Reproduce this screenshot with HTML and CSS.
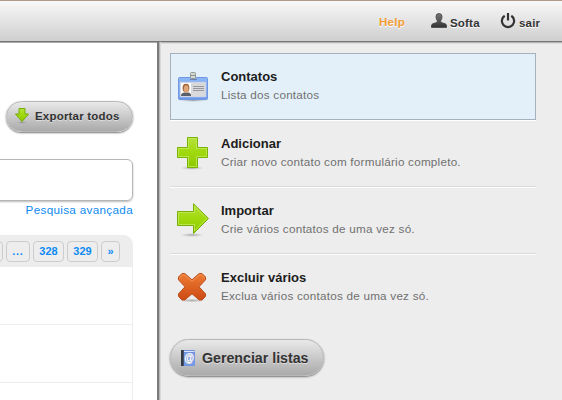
FILE: index.html
```html
<!DOCTYPE html>
<html lang="pt">
<head>
<meta charset="utf-8">
<title>Contatos</title>
<link rel="stylesheet" href="styles.css">
</head>
<body>
<svg width="0" height="0" class="defs" aria-hidden="true">
  <defs>
    <linearGradient id="green" x1="0" y1="0" x2="0" y2="1"><stop offset="0" stop-color="#b4e23c"/><stop offset=".5" stop-color="#a0d90c"/><stop offset="1" stop-color="#8cc800"/></linearGradient>
    <linearGradient id="orange" x1="0" y1="0" x2="0" y2="1"><stop offset="0" stop-color="#ee7c34"/><stop offset="1" stop-color="#cc4a14"/></linearGradient>
    <linearGradient id="dark" x1="0" y1="0" x2="0" y2="1"><stop offset="0" stop-color="#777"/><stop offset="1" stop-color="#333"/></linearGradient>
    <linearGradient id="blue" x1="0" y1="0" x2="0" y2="1"><stop offset="0" stop-color="#8db8f5"/><stop offset="1" stop-color="#6d94e6"/></linearGradient>
    <radialGradient id="shade"><stop offset="0" stop-color="#777" stop-opacity=".6"/><stop offset="1" stop-color="#999" stop-opacity="0"/></radialGradient>
  </defs>
</svg>
<header class="topbar">
  <a class="help">Help</a>
  <a class="user"><svg width="16" height="16" viewBox="0 0 16 16"><path d="M5 3.5Q5 .5 8 .5T11 3.5Q11 6 9.8 7.5V9.5Q15.5 10.5 15.5 12V14.5H.5V12Q.5 10.5 6.2 9.5V7.5Q5 6 5 3.5Z" fill="url(#dark)" stroke="#444" stroke-width=".8"/></svg><span>Softa</span></a>
  <a class="logout"><svg width="16" height="16" viewBox="0 0 16 16"><path d="M4.7 2.8A6.1 6.1 0 1 0 11.3 2.8" fill="none" stroke="#333" stroke-width="2.2"/><path d="M8 0V7.5" stroke="#333" stroke-width="2.2"/></svg><span>sair</span></a>
</header>
<div class="columns">
  <main class="main">
    <a class="pill export"><svg width="16" height="17" viewBox="0 0 16 17"><ellipse cx="8" cy="15.5" rx="6" ry="1.5" fill="url(#shade)"/><path d="M5 1.5H11V7H14.6L8 14.5L1.4 7H5Z" fill="url(#green)" stroke="#74ad08"/></svg>Exportar todos</a>
    <div class="search"></div>
    <a class="advanced">Pesquisa avançada</a>
    <section class="list">
      <nav class="pager"><a class="page edge"></a><a class="page dots">...</a><a class="page">328</a><a class="page">329</a><a class="page next">»</a></nav>
      <div class="row"></div>
      <div class="row"></div>
      <div class="row last"></div>
    </section>
  </main>
  <aside class="side">
    <div class="item active">
      <svg width="34" height="34" viewBox="0 0 34 34">
        <ellipse cx="18" cy="31.5" rx="16" ry="1.5" fill="url(#shade)"/>
        <rect x="3.5" y="8.5" width="29" height="22" rx="1" fill="url(#blue)" stroke="#6f97e4"/>
        <rect x="5" y="13" width="26" height="15" fill="#d9d9dc" stroke="#b7ccf4" stroke-width=".6"/>
        <rect x="6" y="14" width="10" height="12.5" fill="#fff"/>
        <path d="M6 27V25.5Q7 24 9 23.5H13Q16 24 16 26V27Z" fill="#596069"/>
        <ellipse cx="11" cy="19" rx="3.4" ry="4.3" fill="#9c6038"/><ellipse cx="11.2" cy="20" rx="2.4" ry="3.8" fill="#dda679"/>
        <path d="M18 17.5H29M18 19.5H29M18 21.5H29" stroke="#96989e"/>
        <rect x="15.5" y="3.5" width="5" height="6" rx="1" fill="#d4d8d4" stroke="#8f9894"/><path d="M16 6.5H20" stroke="#8b948e"/><path d="M15 10.5H22" stroke="#6c82ac"/>
      </svg>
      <div><h3>Contatos</h3><p>Lista dos contatos</p></div>
    </div>
    <div class="item">
      <svg width="34" height="34" viewBox="0 0 34 34">
        <ellipse cx="17" cy="32" rx="12" ry="2" fill="url(#shade)"/>
        <path d="M12.5 1.5H22.5V11.5H32.5V21.5H22.5V31.5H12.5V21.5H2.5V11.5H12.5Z" fill="url(#green)" stroke="#77b300"/>
        <path d="M13.5 2.5H21.5V12.5H31.5V20.5H21.5V30.5H13.5V20.5H3.5V12.5H13.5Z" fill="none" stroke="#c9ed65" opacity=".7"/>
      </svg>
      <div><h3>Adicionar</h3><p>Criar novo contato com formulário completo.</p></div>
    </div>
    <div class="item">
      <svg width="34" height="34" viewBox="0 0 34 34">
        <ellipse cx="17" cy="32" rx="12" ry="2" fill="url(#shade)"/>
        <path d="M2.5 8.5H18.5V.8L33.5 15.5L18.5 30.5V22.5H2.5Z" fill="url(#green)" stroke="#77ad08"/>
        <path d="M3.5 9.5H19.5V3.2L32 15.5L19.5 28V21.5H3.5Z" fill="none" stroke="#c9ed65" opacity=".7"/>
      </svg>
      <div><h3>Importar</h3><p>Crie vários contatos de uma vez só.</p></div>
    </div>
    <div class="item">
      <svg width="34" height="34" viewBox="0 0 34 34">
        <ellipse cx="17" cy="30.5" rx="14" ry="1.8" fill="url(#shade)"/>
        <path d="M7 3.5H9.8L17 9.8L24.2 3.5H27L30.5 7V9.8L24 16.8L30.5 23.8V26.5L27 30H24.2L17 23.8L9.8 30H7L3.5 26.5V23.8L10 16.8L3.5 9.8V7Z" fill="url(#orange)" stroke="#bd4c1b" stroke-linejoin="round"/>
        <path d="M4.7 8.8V7.6L7.5 4.7H9.3L17 11.3L24.7 4.7H26.5L29.3 7.6V8.8" fill="none" stroke="#f6a66c" opacity=".6"/>
      </svg>
      <div><h3>Excluir vários</h3><p>Exclua vários contatos de uma vez só.</p></div>
    </div>
    <a class="pill manage"><svg width="16" height="18" viewBox="0 0 16 18"><rect x="1" y="1" width="14" height="16" rx="1" fill="#6d91df"/><path d="M4 2.5H14.5" stroke="#dbe6fb"/><path d="M1 1H3.7V17H1Z" fill="#333842"/><rect x="4" y="4" width="10.5" height="12.5" fill="#789be8"/><text x="9.2" y="12.3" text-anchor="middle" class="at">@</text></svg>Gerenciar listas</a>
  </aside>
</div>
</body>
</html>
```

FILE: styles.css
```css
* { box-sizing: border-box; }
body {
  margin: 0;
  width: 562px;
  height: 400px;
  overflow: hidden;
  background: #fff;
  font-family: "Liberation Sans", Arial, sans-serif;
  font-size: 11.7px;
}
.defs { position: absolute; }
svg { display: block; flex: none; }

.topbar {
  height: 42px;
  display: flex;
  align-items: flex-start;
  padding: 13px 0 0 379px;
  border-top: 1px solid #b09b8b;
  border-bottom: 1px solid #777;
  background: linear-gradient(#f8f8f8, #cfcfcf);
  font-size: 11.5px;
  line-height: 17px;
  font-weight: bold;
  color: #333;
  text-shadow: 0 1px 0 #fff;
}
.topbar a { display: flex; }
.topbar span { margin-top: 1px; }
.help { color: #f29c33; width: 52px; letter-spacing: .3px; }
.user { width: 69px; gap: 3px; letter-spacing: .2px; }
.logout { gap: 3px; letter-spacing: .2px; }
.topbar svg { margin-top: -1px; }

.columns { display: flex; height: 358px; box-shadow: inset 0 1px 0 #aaa; }
.main { width: 157px; padding-top: 59px; }
.side {
  width: 405px;
  padding: 11px 26px 0 11px;
  border-left: 2px solid #7b7b7b;
  background: #ededed;
  box-shadow: inset 1px 0 0 #b5b5b5, inset 2px 0 0 #d9d9d9, inset 0 1px 0 #b5b5b5, inset 0 2px 0 #dedede;
}

.pill {
  display: flex;
  align-items: center;
  border: 1px solid #b8b8b8;
  border-radius: 20px;
  background: linear-gradient(#e9e9e9, #aaa);
  box-shadow: 0 1px 2px #777;
  color: #333;
  font-weight: bold;
  text-shadow: 0 1px 0 #ddd;
}
.export {
  width: 127px;
  height: 31px;
  margin-left: 6px;
  padding: 0 0 2px 7px;
  gap: 5px;
  font-size: 11.5px;
  letter-spacing: .2px;
}
.manage { width: 154px; height: 37px; margin-top: 18px; padding-left: 9px; gap: 6px; font-size: 14.2px; }
.at { font: bold 10px "Liberation Sans", sans-serif; fill: #fff; }

.search {
  width: 143px;
  height: 42px;
  margin: 27px 0 0 -10px;
  border: 1px solid #b5b5b5;
  border-radius: 6px;
  box-shadow: 0 1px 2px #bbb;
}
.advanced {
  display: block;
  width: 133px;
  margin-top: 2px;
  text-align: right;
  line-height: 14px;
  letter-spacing: .32px;
  color: #0d8bf2;
}
.list {
  width: 133px;
  height: 165px;
  overflow: hidden;
  margin-top: 18px;
  border-right: 1px solid #ededed;
  border-radius: 0 9px 0 0;
}
.pager {
  width: 133px;
  height: 32px;
  padding: 6px 13px 0 0;
  display: flex;
  justify-content: flex-end;
  gap: 3px;
  overflow: hidden;
  background: #ededed;
  border-radius: 0 9px 0 0;
}
.page {
  flex: none;
  width: 31px;
  height: 21px;
  border: 1px solid #ccc;
  border-radius: 4px;
  font-size: 11px;
  font-weight: bold;
  line-height: 18px;
  text-align: center;
  color: #0d8bf2;
}
.edge { width: 12px; }
.dots { width: 24px; letter-spacing: .7px; }
.next { width: 19px; }
.row { height: 58px; border-bottom: 1px solid #ededed; }
.last { height: 17px; border: 0; }

.item {
  height: 67px;
  width: 366px;
  display: flex;
  align-items: flex-start;
  padding: 15px 0 0 4px;
  gap: 12px;
  border: 1px solid transparent;
  border-bottom-color: #d9d9d9;
  box-shadow: 0 1px 0 #fff;
}
.active { background: #e4f0f9; border-color: #a4b2bf; }
.item:nth-child(4) { border-color: transparent; box-shadow: none; }
h3 { margin: 0; font-size: 13px; line-height: 16px; color: #1c1c1c; }
p { margin: 2px 0 0; line-height: 15px; letter-spacing: .23px; color: #707070; }
```
